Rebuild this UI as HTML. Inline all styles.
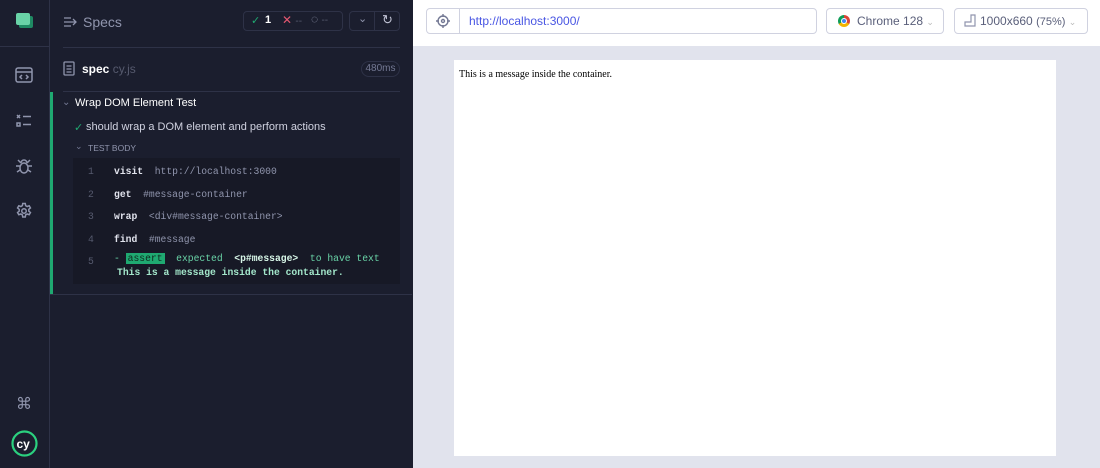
<!DOCTYPE html><html><head><style>
*{margin:0;padding:0;box-sizing:border-box}
body{width:1100px;height:468px;overflow:hidden;background:#1b1e2e;font-family:"Liberation Sans",sans-serif;position:relative}
.a{position:absolute}
.mono{font-family:"Liberation Mono",monospace;font-size:9.7px}
</style></head><body>
<!-- sidebar -->
<div class="a" style="left:0;top:0;width:50px;height:468px;background:#1b1e2e;border-right:1px solid #2e3247"></div>
<div class="a" style="left:0;top:46px;width:49px;height:1px;background:#2e3247"></div>
<div class="a" style="width:14px;height:12px;background:#1f8a63;border-radius:2px;left:19px;top:16px"></div>
<div class="a" style="left:16px;top:13px;width:14px;height:12px;background:#69d3a7;border-radius:2px"></div>
<svg class="a" style="left:15px;top:67px" width="18" height="16" viewBox="0 0 18 16" fill="none" stroke="#9095ad" stroke-width="1.5"><rect x="1" y="1" width="16" height="14" rx="2"/><line x1="1" y1="5" x2="17" y2="5"/><path d="M7 8l-2 2 2 2M11 8l2 2-2 2"/></svg>
<svg class="a" style="left:16px;top:113px" width="16" height="16" viewBox="0 0 16 16" fill="none" stroke="#9095ad" stroke-width="1.5"><path d="M1 2l3 3M4 2l-3 3M7 3.5h8M1 10h3v3H1zM7 11.5h8"/></svg>
<svg class="a" style="left:15px;top:157px" width="18" height="18" viewBox="0 0 18 18" fill="none" stroke="#9095ad" stroke-width="1.5"><ellipse cx="9" cy="11" rx="4" ry="5"/><path d="M6 6a3 3 0 0 1 6 0M1 9h4M13 9h4M2 15l3-2M16 15l-3-2M3 3l3 3M15 3l-3 3"/></svg>
<svg class="a" style="left:15px;top:202px" width="18" height="18" viewBox="0 0 24 24" fill="none" stroke="#9095ad" stroke-width="2"><circle cx="12" cy="12" r="3"/><path d="M10.3 2h3.4l.5 2.8 2 1.2 2.7-1 1.7 3-2.2 1.8v2.4l2.2 1.8-1.7 3-2.7-1-2 1.2-.5 2.8h-3.4l-.5-2.8-2-1.2-2.7 1-1.7-3 2.2-1.8v-2.4L3.4 8l1.7-3 2.7 1 2-1.2z"/></svg>
<div class="a" style="left:16px;top:394px;color:#9095ad;font-size:16px">⌘</div>
<svg class="a" style="left:11px;top:430px" width="27" height="27" viewBox="0 0 27 27"><circle cx="13.5" cy="13.5" r="12" fill="none" stroke="#2bd17f" stroke-width="2.2"/><text x="5.5" y="18" font-family="Liberation Sans" font-weight="bold" font-size="12" fill="#fff">cy</text></svg>
<!-- reporter -->
<svg class="a" style="left:63px;top:15px" width="14" height="14" viewBox="0 0 14 14" stroke="#9095ad" stroke-width="1.3" fill="none"><path d="M1 3h7M1 7h12M1 11h7M10 4l3 3-3 3"/></svg>
<div class="a" style="left:83px;top:14px;color:#9095ad;font-size:14px">Specs</div>
<div class="a" style="left:243px;top:11px;width:100px;height:20px;border:1px solid #2e3247;border-radius:4px"></div>
<div class="a" style="left:251px;top:14px;font-size:11px;color:#1fa971">✓</div>
<div class="a" style="left:265px;top:14px;font-size:11px;color:#fff;font-weight:bold">1</div>
<div class="a" style="left:282px;top:13px;font-size:12px;color:#e45770">✕ <span style="color:#565a6e;font-size:10px">--</span></div>
<div class="a" style="left:311px;top:12px;font-size:12px;color:#9095ad;font-weight:bold">◌ <span style="color:#565a6e;font-size:10px;font-weight:normal">--</span></div>
<div class="a" style="left:349px;top:11px;width:51px;height:20px;border:1px solid #2e3247;border-radius:4px"></div>
<div class="a" style="left:374px;top:11px;width:1px;height:20px;background:#2e3247"></div>
<div class="a" style="left:358px;top:12px;font-size:11px;color:#9095ad">⌄</div>
<div class="a" style="left:382px;top:12px;font-size:13px;color:#c0c3d4">↻</div>
<div class="a" style="left:63px;top:47px;width:337px;height:1px;background:#2e3247"></div>
<svg class="a" style="left:63px;top:61px" width="12" height="15" viewBox="0 0 12 15" fill="none" stroke="#9095ad" stroke-width="1.3"><rect x="1" y="1" width="10" height="13" rx="1"/><path d="M3.5 5h5M3.5 8h5M3.5 11h5"/></svg>
<div class="a" style="left:82px;top:62px;font-size:12px;color:#fff;font-weight:bold">spec <span style="color:#565a6e;font-weight:normal">cy.js</span></div>
<div class="a" style="left:361px;top:61px;width:39px;height:16px;border:1px solid #2e3247;border-radius:8px;color:#747994;font-size:10px;text-align:center;line-height:14px">480ms</div>
<div class="a" style="left:63px;top:91px;width:337px;height:1px;background:#2e3247"></div>
<div class="a" style="left:50px;top:92px;width:3px;height:202px;background:#1fa971"></div>
<div class="a" style="left:50px;top:294px;width:362px;height:1px;background:#2e3247"></div>
<div class="a" style="left:62px;top:97px;font-size:10px;color:#747994">⌄</div>
<div class="a" style="left:75px;top:97px;font-size:11px;color:#fff">Wrap DOM Element Test</div>
<div class="a" style="left:74px;top:121px;font-size:11px;color:#1fa971">✓</div>
<div class="a" style="left:86px;top:121px;font-size:11px;color:#d0d2e0">should wrap a DOM element and perform actions</div>
<div class="a" style="left:75px;top:141px;font-size:9px;color:#747994">⌄</div>
<div class="a" style="left:88px;top:143px;font-size:8.5px;color:#9095ad">TEST BODY</div>
<div class="a" style="left:73px;top:158px;width:327px;height:126px;background:#171926"></div>
<div class="a mono" style="left:88px;top:161px;color:#565a6e;line-height:22.6px">1<br>2<br>3<br>4<br>5</div>
<div class="a mono" style="left:114px;top:161px;line-height:22.6px;color:#9095ad"><b style="color:#e1e3ed">visit</b>&nbsp; http://localhost:3000<br><b style="color:#e1e3ed">get</b>&nbsp; #message-container<br><b style="color:#e1e3ed">wrap</b>&nbsp; &lt;div#message-container&gt;<br><b style="color:#e1e3ed">find</b>&nbsp; #message</div>
<div class="a mono" style="left:114px;top:253px;color:#69d3a7">- <span style="background:#1fa971;color:#0f2a1f;padding:0 2px">assert</span>&nbsp; expected&nbsp; <b style="color:#d8f7e8">&lt;p#message&gt;</b>&nbsp; to have text</div>
<div class="a mono" style="left:117px;top:267px;color:#a3e7cb;font-weight:bold">This is a message inside the container.</div>
<!-- right -->
<div class="a" style="left:413px;top:0;width:687px;height:468px;background:#e1e3ed"></div>
<div class="a" style="left:413px;top:0;width:687px;height:46px;background:#fff"></div>
<div class="a" style="left:426px;top:8px;width:391px;height:26px;border:1px solid #d0d2e0;border-radius:4px"></div>
<div class="a" style="left:459px;top:8px;width:1px;height:26px;background:#d0d2e0"></div>
<svg class="a" style="left:436px;top:14px" width="14" height="14" viewBox="0 0 14 14" fill="none" stroke="#747994" stroke-width="1.4"><circle cx="7" cy="7" r="5"/><circle cx="7" cy="7" r="1.5"/><path d="M7 0v3M7 11v3M0 7h3M11 7h3"/></svg>
<div class="a" style="left:469px;top:14px;font-size:12px;color:#4956e3">http://localhost:3000/</div>
<div class="a" style="left:826px;top:8px;width:118px;height:26px;border:1px solid #d0d2e0;border-radius:4px"></div>
<div class="a" style="left:838px;top:15px;width:12px;height:12px;border-radius:50%;background:conic-gradient(#db4437 0 120deg,#f4b400 120deg 240deg,#0f9d58 240deg);"></div>
<div class="a" style="left:841px;top:18px;width:6px;height:6px;border-radius:50%;background:#4285f4;border:1px solid #fff"></div>
<div class="a" style="left:857px;top:14px;font-size:12px;color:#5a5f7a">Chrome 128 <span style="color:#bbb;font-size:9px">⌄</span></div>
<div class="a" style="left:954px;top:8px;width:134px;height:26px;border:1px solid #d0d2e0;border-radius:4px"></div>
<svg class="a" style="left:964px;top:14px" width="12" height="13" viewBox="0 0 12 13" fill="none" stroke="#9095ad" stroke-width="1.2"><path d="M1 12h10V1h-4v7H1z"/></svg>
<div class="a" style="left:980px;top:14px;font-size:12px;color:#5a5f7a">1000x660 <span style="font-size:11px">(75%)</span> <span style="color:#bbb;font-size:9px">⌄</span></div>
<div class="a" style="left:454px;top:60px;width:602px;height:396px;background:#fff"></div>
<div class="a" style="left:459px;top:69px;font-family:'Liberation Serif',serif;font-size:10px;color:#000">This is a message inside the container.</div>
</body></html>
